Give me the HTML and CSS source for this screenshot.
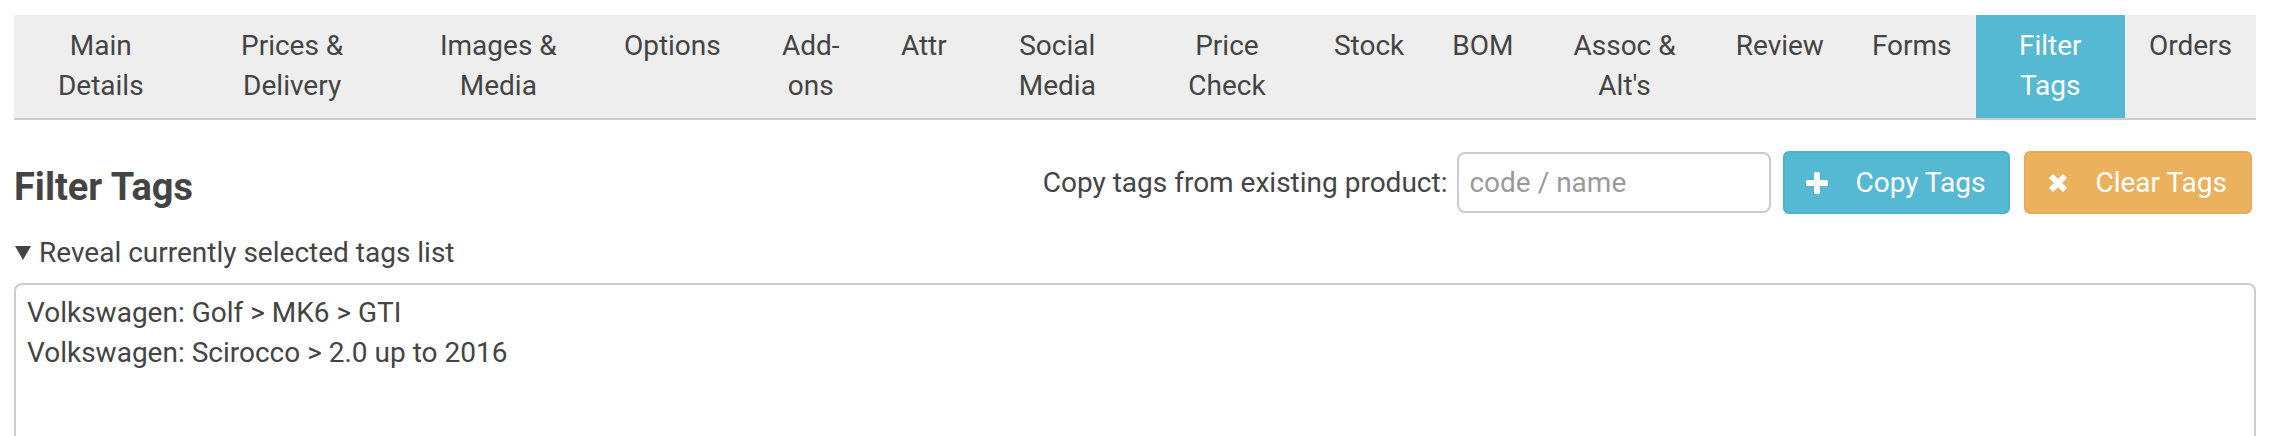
FILE: index.html
```html
<!DOCTYPE html>
<html lang="en">
<head>
<meta charset="utf-8">
<title>Filter Tags</title>
<link rel="stylesheet" href="styles.css">
</head>
<body>
<div class="page">
  <nav class="tabs-wrap">
    <ul class="tabs">
      <li class="tab">Main Details</li>
      <li class="tab">Prices &amp; Delivery</li>
      <li class="tab">Images &amp; Media</li>
      <li class="tab">Options</li>
      <li class="tab">Add-ons</li>
      <li class="tab">Attr</li>
      <li class="tab">Social Media</li>
      <li class="tab">Price Check</li>
      <li class="tab">Stock</li>
      <li class="tab">BOM</li>
      <li class="tab">Assoc &amp; Alt's</li>
      <li class="tab">Review</li>
      <li class="tab">Forms</li>
      <li class="tab active">Filter Tags</li>
      <li class="tab">Orders</li>
    </ul>
  </nav>

  <div class="title-row">
    <h3 class="title">Filter Tags</h3>
    <div class="copy-controls">
      <label class="copy-label" for="copy-src">Copy tags from existing product:</label>
      <input id="copy-src" class="copy-input" type="text" placeholder="code / name">
      <button class="btn btn-info" type="button">
        <svg class="btn-icon" width="22" height="22" viewBox="0 0 22 22" aria-hidden="true"><path d="M8 1.5Q8 0 9.5 0h3Q14 0 14 1.5V8h6.5Q22 8 22 9.5v3Q22 14 20.5 14H14v6.5Q14 22 12.5 22h-3Q8 22 8 20.5V14H1.5Q0 14 0 12.5v-3Q0 8 1.5 8H8z" fill="#fff"/></svg>
        <span>Copy Tags</span>
      </button>
      <button class="btn btn-warning" type="button">
        <svg class="btn-icon" width="20" height="20" viewBox="0 0 20 20" aria-hidden="true"><path d="M3 3L17 17M17 3L3 17" stroke="#fff" stroke-width="6"/></svg>
        <span>Clear Tags</span>
      </button>
    </div>
  </div>

  <details class="tag-list" open>
    <summary class="tag-summary"><svg class="caret" width="16" height="14" viewBox="0 0 16 14" aria-hidden="true"><path d="M0 0H16L8 14Z" fill="#444"/></svg>Reveal currently selected tags list</summary>
    <textarea class="tag-text">Volkswagen: Golf &gt; MK6 &gt; GTI
Volkswagen: Scirocco &gt; 2.0 up to 2016</textarea>
  </details>
</div>
</body>
</html>
```

FILE: styles.css
```css
html, body {
  margin: 0;
  padding: 0;
  overflow: hidden;
  background: #fff;
}

body {
  font-family: Roboto, "Liberation Sans", Arial, sans-serif;
  font-size: 28px;
  line-height: 40px;
  color: #444;
}

.page {
  padding: 15px 18px 0 14px;
}

/* Tabs */
.tabs-wrap {
  background: #eee;
  border-bottom: 2px solid #ccc;
}

.tabs {
  display: table;
  width: 100%;
  margin: 0;
  padding: 0;
  list-style: none;
}

.tab {
  display: table-cell;
  padding: 11px 24px 12px;
  text-align: center;
  vertical-align: top;
  color: #444;
  cursor: pointer;
}

.tab.active {
  background: #56b9d3;
  color: #fff;
}

/* Title row */
.title-row {
  display: flex;
  justify-content: space-between;
  align-items: flex-start;
  margin-top: 31px;
}

.title {
  margin: 14px 0 0;
  font-size: 38px;
  line-height: 44px;
  font-weight: 700;
  color: #444;
}

.copy-controls {
  display: flex;
  align-items: center;
  margin-right: 4px;
}

.copy-label {
  margin-right: 10px;
  color: #444;
}

.copy-input {
  box-sizing: border-box;
  width: 314px;
  height: 61px;
  margin-right: 12px;
  padding: 0 10px;
  border: 2px solid #ccc;
  border-radius: 8px;
  font-family: inherit;
  font-size: 28px;
  color: #444;
  background: #fff;
  outline: none;
}

.copy-input::placeholder {
  color: #9a9a9a;
}

.btn {
  box-sizing: border-box;
  display: inline-flex;
  align-items: center;
  gap: 27px;
  height: 63px;
  padding: 0 23px 0 21px;
  border: 2px solid transparent;
  border-radius: 6px;
  font-family: inherit;
  font-size: 28px;
  line-height: 40px;
  color: #fff;
  cursor: pointer;
}

.btn-icon {
  display: block;
  flex: none;
}

.btn-info {
  background: #56b9d3;
  border-color: #4fb2cc;
}

.btn-warning {
  margin-left: 14px;
  padding-left: 22px;
  background: #ecb15d;
  border-color: #e8ab55;
}

/* Tag list */
.tag-list {
  margin-top: 19px;
}

.tag-summary {
  display: flex;
  align-items: center;
  list-style: none;
  cursor: pointer;
  color: #444;
}

.tag-summary::-webkit-details-marker {
  display: none;
}

.caret {
  display: block;
  margin: 0 8px 0 1px;
}

.tag-text {
  display: block;
  box-sizing: border-box;
  width: 100%;
  height: 320px;
  margin-top: 10px;
  padding: 8px 11px;
  border: 2px solid #ccc;
  border-radius: 8px;
  font-family: inherit;
  font-size: 28px;
  line-height: 40px;
  color: #444;
  background: #fff;
  resize: vertical;
  outline: none;
}
```
